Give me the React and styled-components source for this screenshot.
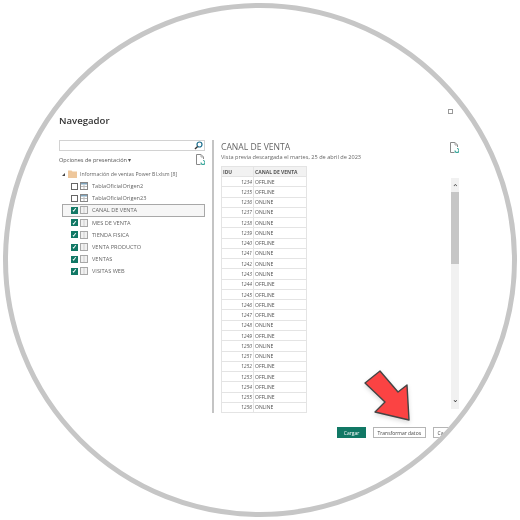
import React from 'react';
import styled, { createGlobalStyle } from 'styled-components';

const GlobalStyle = createGlobalStyle`
  html, body {
    margin: 0;
    padding: 0;
    background: #ffffff;
  }
  body {
    font-family: "Open Sans", "Liberation Sans", sans-serif;
  }
`;

const tables = [
  { name: 'TablaOficialOrigen2', checked: false, kind: 'table' },
  { name: 'TablaOficialOrigen23', checked: false, kind: 'table' },
  { name: 'CANAL DE VENTA', checked: true, kind: 'sheet', selected: true },
  { name: 'MES DE VENTA', checked: true, kind: 'sheet' },
  { name: 'TIENDA FISICA', checked: true, kind: 'sheet' },
  { name: 'VENTA PRODUCTO', checked: true, kind: 'sheet' },
  { name: 'VENTAS', checked: true, kind: 'sheet' },
  { name: 'VISITAS WEB', checked: true, kind: 'sheet' },
];

const rows = [
  [1234, 'OFFLINE'], [1235, 'OFFLINE'], [1236, 'ONLINE'], [1237, 'ONLINE'],
  [1238, 'ONLINE'], [1239, 'ONLINE'], [1240, 'OFFLINE'], [1241, 'ONLINE'],
  [1242, 'ONLINE'], [1243, 'ONLINE'], [1244, 'OFFLINE'], [1245, 'OFFLINE'],
  [1246, 'OFFLINE'], [1247, 'OFFLINE'], [1248, 'ONLINE'], [1249, 'OFFLINE'],
  [1250, 'ONLINE'], [1251, 'ONLINE'], [1252, 'OFFLINE'], [1253, 'OFFLINE'],
  [1254, 'OFFLINE'], [1255, 'OFFLINE'], [1256, 'ONLINE'],
];

const DocIcon = () => (
  <svg width="9" height="11" viewBox="0 0 9 11" fill="none">
    <path d="M0.5 0.5H5L7.5 3V5M0.5 0.5V10.5H4.5" stroke="#888" />
    <path d="M5 0.5V3H7.5" stroke="#aaa" />
    <path d="M5 8.5a2 2 0 1 0 2-2" stroke="#3aa79b" strokeWidth="1.2" />
  </svg>
);

const SearchIcon = () => (
  <svg width="9" height="9" viewBox="0 0 9 9" fill="none">
    <circle cx="5.5" cy="3.5" r="2.5" stroke="#1d6f8e" strokeWidth="1.2" />
    <path d="M3.6 5.4L1 8" stroke="#333" strokeWidth="1.4" />
  </svg>
);

const TableIcon = () => (
  <svg width="8" height="8" viewBox="0 0 8 8" fill="none">
    <rect x="0.5" y="0.5" width="7" height="7" stroke="#888" />
    <rect x="1" y="1" width="6" height="1.5" fill="#7fa3bb" />
    <path d="M1 4.5H7M4 3V7" stroke="#bbb" />
  </svg>
);

const SheetIcon = () => (
  <svg width="8" height="8" viewBox="0 0 8 8" fill="none">
    <rect x="0.5" y="0.5" width="7" height="7" fill="#f1f1f1" stroke="#a8a8a8" />
    <path d="M4 1V7" stroke="#cfcfcf" />
  </svg>
);

const FolderIcon = () => (
  <svg width="9" height="8" viewBox="0 0 9 8">
    <path d="M0 0.5H3.5L4.5 1.5H9V8H0Z" fill="#eec79c" />
  </svg>
);

const App = () => (
  <>
    <GlobalStyle />
    <Page>
      <Lens>
        <Dialog>
          <WindowBar>
            <WindowSquare />
          </WindowBar>
          <Title>Navegador</Title>
          <Columns>
            <LeftPane>
              <SearchBox>
                <SearchIcon />
              </SearchBox>
              <OptionsRow>
                <OptionsLabel>Opciones de presentación ▾</OptionsLabel>
                <DocIcon />
              </OptionsRow>
              <Tree>
                <SourceRow>
                  <Caret />
                  <FolderIcon />
                  <span>Información de ventas Power BI.xlsm [8]</span>
                </SourceRow>
                {tables.map((t) => (
                  <TreeRow key={t.name} selected={t.selected}>
                    <Check checked={t.checked}>{t.checked && '✓'}</Check>
                    {t.kind === 'table' ? <TableIcon /> : <SheetIcon />}
                    <RowLabel>{t.name}</RowLabel>
                  </TreeRow>
                ))}
              </Tree>
            </LeftPane>
            <RightPane>
              <PreviewHead>
                <div>
                  <PreviewTitle>CANAL DE VENTA</PreviewTitle>
                  <PreviewNote>Vista previa descargada el martes, 25 de abril de 2023</PreviewNote>
                </div>
                <DocIcon />
              </PreviewHead>
              <PreviewBody>
                <DataTable>
                  <thead>
                    <tr>
                      <HeadCell>IDU</HeadCell>
                      <HeadCell>CANAL DE VENTA</HeadCell>
                    </tr>
                  </thead>
                  <tbody>
                    {rows.map(([id, channel]) => (
                      <tr key={id}>
                        <IdCell>{id}</IdCell>
                        <Cell>{channel}</Cell>
                      </tr>
                    ))}
                  </tbody>
                </DataTable>
                <Scrollbar>
                  <ScrollArrow>⌃</ScrollArrow>
                  <ScrollThumb />
                  <ScrollArrow down>⌄</ScrollArrow>
                </Scrollbar>
              </PreviewBody>
            </RightPane>
          </Columns>
          <Footer>
            <PrimaryButton>Cargar</PrimaryButton>
            <Button>Transformar datos</Button>
            <Button>Cancelar</Button>
          </Footer>
        </Dialog>
      </Lens>
      <Arrow width="56" height="60" viewBox="0 0 56 60">
        <path d="M5 18L20 6L38 27L47 20L49 55L15 47L25 37Z" fill="#fb4343" stroke="#444" strokeWidth="1.4" strokeLinejoin="round" />
      </Arrow>
    </Page>
  </>
);

const Page = styled.div`
  position: relative;
  width: 520px;
  height: 520px;
  overflow: hidden;
  background: #ffffff;
`;

const Lens = styled.div`
  box-sizing: border-box;
  width: 514px;
  height: 514px;
  margin: 3px;
  border: 5px solid #c6c6c6;
  border-radius: 50%;
  overflow: hidden;
  background: #ffffff;
`;

const Dialog = styled.div`
  width: 560px;
  margin-left: 51px;
  padding-top: 101px;
  color: #444;
  filter: blur(0.25px);
`;

const WindowBar = styled.div`
  display: flex;
  justify-content: flex-end;
  height: 5px;
  width: 394px;
`;

const WindowSquare = styled.div`
  box-sizing: border-box;
  width: 5px;
  height: 5px;
  border: 1px solid #999;
`;

const Title = styled.h1`
  margin: 0 0 12px;
  font-size: 9.6px;
  line-height: 14px;
  font-weight: 600;
  color: #333;
`;

const Columns = styled.div`
  display: flex;
`;

const LeftPane = styled.div`
  box-sizing: border-box;
  width: 155px;
  height: 273px;
  border-right: 2px solid #c4c4c4;
  padding-right: 7px;
  flex-shrink: 0;
`;

const SearchBox = styled.div`
  box-sizing: border-box;
  height: 11px;
  width: 146px;
  display: flex;
  justify-content: flex-end;
  align-items: center;
  padding-right: 1px;
  border: 1px solid #d2d2d2;
`;

const OptionsRow = styled.div`
  display: flex;
  justify-content: space-between;
  align-items: center;
  margin-top: 3px;
  width: 146px;
  height: 11px;
`;

const OptionsLabel = styled.span`
  font-size: 5.6px;
  color: #555;
`;

const Tree = styled.div`
  margin-top: 3px;
`;

const SourceRow = styled.div`
  display: flex;
  align-items: center;
  gap: 3px;
  height: 12px;
  font-size: 5.2px;
  color: #666;
`;

const Caret = styled.i`
  display: block;
  margin-left: 3px;
  border-left: 3px solid transparent;
  border-bottom: 3px solid #444;
`;

const TreeRow = styled.div`
  box-sizing: border-box;
  display: flex;
  align-items: center;
  gap: 2px;
  height: 12.2px;
  width: 143px;
  margin-left: 3px;
  padding-left: 8px;
  font-size: 5.6px;
  color: #666;
  border: 1px solid ${(p) => (p.selected ? '#a8a8a8' : 'transparent')};
  background: ${(p) => (p.selected ? '#f6f6f6' : 'transparent')};
`;

const RowLabel = styled.span`
  margin-left: 2px;
`;

const Check = styled.b`
  box-sizing: border-box;
  width: 7px;
  height: 7px;
  display: flex;
  align-items: center;
  justify-content: center;
  font-size: 6px;
  line-height: 1;
  color: #fff;
  border: 1px solid ${(p) => (p.checked ? '#117865' : '#666')};
  background: ${(p) => (p.checked ? '#117865' : '#fff')};
`;

const RightPane = styled.div`
  margin-left: 7px;
  margin-top: 2px;
  width: 240px;
`;

const PreviewHead = styled.div`
  display: flex;
  justify-content: space-between;
  align-items: flex-start;
  width: 238px;
  height: 24px;
`;

const PreviewTitle = styled.div`
  font-size: 8.6px;
  line-height: 11px;
  font-weight: 400;
  color: #666;
`;

const PreviewNote = styled.div`
  font-size: 5.6px;
  line-height: 9px;
  color: #666;
`;

const PreviewBody = styled.div`
  display: flex;
  align-items: flex-start;
  height: 247px;
  overflow: hidden;
`;

const DataTable = styled.table`
  border-collapse: collapse;
  table-layout: fixed;
  width: 86px;
  font-size: 5px;
  color: #555;
`;

const HeadCell = styled.th`
  box-sizing: border-box;
  height: 10px;
  padding: 0 1px;
  text-align: left;
  background: #f2f2f2;
  border: 1px solid #e4e4e4;
  font-weight: 700;

  &:first-child {
    width: 32px;
  }
`;

const Cell = styled.td`
  box-sizing: border-box;
  height: 10.27px;
  padding: 0 1px;
  border: 1px solid #e4e4e4;
`;

const IdCell = styled(Cell)`
  text-align: right;
  font-style: italic;
`;

const Scrollbar = styled.div`
  display: flex;
  flex-direction: column;
  width: 8px;
  height: 231px;
  margin: 12px 0 0 144px;
  background: #f1f1f1;
`;

const ScrollArrow = styled.div`
  height: 14px;
  font-size: 8px;
  line-height: ${(p) => (p.down ? '8px' : '18px')};
  text-align: center;
  color: #333;
`;

const ScrollThumb = styled.div`
  height: 72px;
  background: #c6c6c6;
  margin-bottom: auto;
`;

const Footer = styled.div`
  display: flex;
  gap: 6.5px;
  margin: 14px 0 0 278px;
`;

const Button = styled.button`
  box-sizing: border-box;
  height: 11px;
  padding: 0 4px;
  background: #fff;
  border: 1px solid #b5b5b5;
  font-family: inherit;
  font-size: 5px;
  color: #444;
  white-space: nowrap;
`;

const PrimaryButton = styled(Button)`
  width: 29px;
  background: #117865;
  border-color: #117865;
  color: #fff;
`;

const Arrow = styled.svg`
  position: absolute;
  left: 360px;
  top: 365px;
  filter: drop-shadow(0 2px 2px rgba(0, 0, 0, 0.15));
`;

export default App;
